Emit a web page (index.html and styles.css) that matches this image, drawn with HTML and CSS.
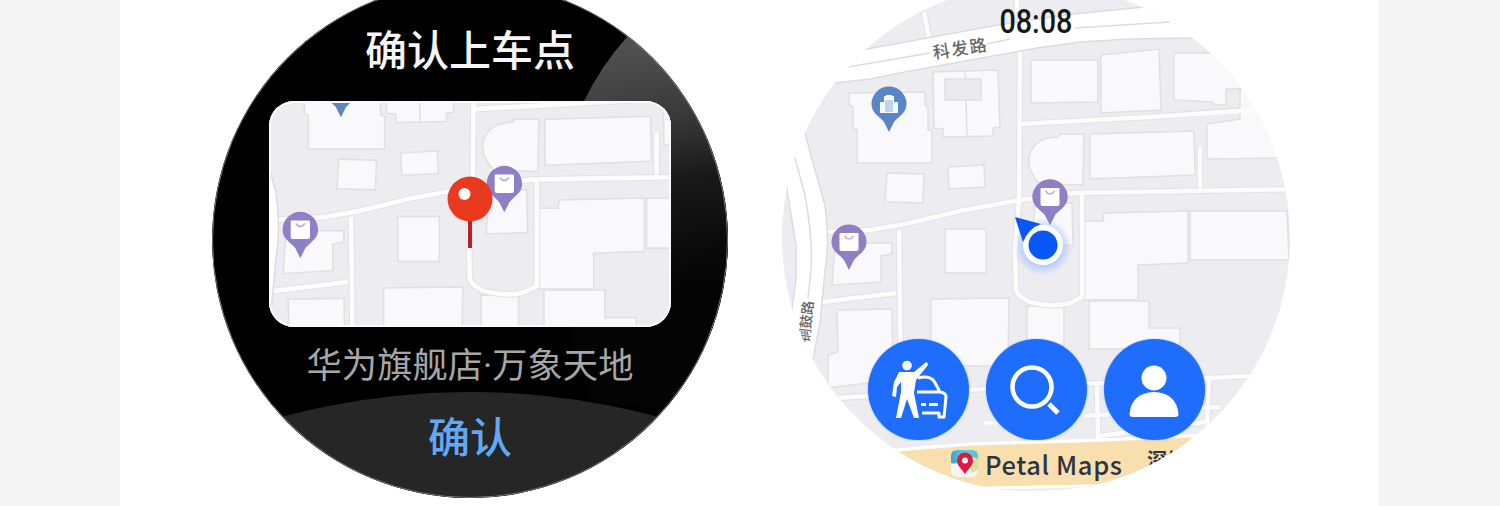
FILE: index.html
```html
<!DOCTYPE html>
<html lang="zh-CN">
<head>
<meta charset="utf-8">
<title>Petal Maps</title>
<link rel="stylesheet" href="styles.css">
</head>
<body>
<main class="sheet">
  <section class="watch watch-confirm">
    <svg class="backdrop" viewBox="212 -18 516 516">
      <defs>
        <linearGradient id="sheen" gradientUnits="userSpaceOnUse" x1="610" y1="50" x2="650" y2="300">
          <stop offset="0" stop-color="#505050"/><stop offset=".3" stop-color="#393939"/>
          <stop offset=".55" stop-color="#191919"/><stop offset=".85" stop-color="#090909"/><stop offset="1" stop-color="#040404"/>
        </linearGradient>
      </defs>
      <path fill="url(#sheen)" d="M627 37Q601 66 584 101C550 175 548 290 592 400L740 420V20Z"/>
      <circle cx="470" cy="1117" r="725" fill="#262626"/>
    </svg>
    <h1 class="title">确认上车点</h1>
    <div class="map-card">
      <svg class="card-map" viewBox="269 101 402 226">
        <use href="#city" transform="matrix(1.015 0 0 1.022 -561.4 -17.6)"/>
        <path d="M470 218V248" stroke="#b8202c" stroke-width="4"/>
        <circle cx="470" cy="199" r="22.5" fill="#e93a20"/>
        <circle cx="464.500" cy="194" r="6" fill="#fff"/>
      </svg>
    </div>
    <p class="place">华为旗舰店<span class="dot">·</span>万象天地</p>
    <button class="confirm">确认</button>
  </section>

  <section class="watch watch-map">
    <svg class="backdrop" viewBox="782 -16 508 508">
      <defs>
        <radialGradient id="glow"><stop offset=".5" stop-color="#79a9ff" stop-opacity=".65"/><stop offset="1" stop-color="#79a9ff" stop-opacity="0"/></radialGradient>
        <g id="shop">
          <path d="M-17.500-16A17.500 17.500 0 1 1 17.500-16C17.500-7 10-4 5 2L0 12L-5 2C-10-4-17.500-7-17.500-16Z" fill="#8f80c6"/>
          <path d="M-8.500-25H8.500Q9.500-25 9.500-24V-9Q9.500-7 7.500-7H-7.500Q-9.500-7-9.500-9V-24Q-9.500-25-8.500-25Z" fill="#fff"/>
          <path d="M-4.500-22Q0-16 4.500-22" fill="none" stroke="#b7ace0" stroke-width="1.600"/>
        </g>
        <g id="city">
          <rect x="770" y="-20" width="530" height="520" fill="#ededf1"/>
          <g fill="#f9f9fc" stroke="#e0e0e3" stroke-width="1.500">
            <path d="M849 93L925 92V105L928 107V130L932 131V163H857V130L853 128V107L849 105Z"/>
            <path d="M933 72L998 70L1000 127L993 128V136L943 137V129L934 128Z"/>
            <path d="M945 79H981V100H945ZM964 72L967 79" fill="#ebebee"/><path d="M966 100L967 137"/>
            <path d="M887 173L924 174L923 203L885 202Z"/><path d="M948 167L984 165L985 187L949 189Z"/>
            <path d="M1031 60H1098V102L1031 103Z"/><path d="M1101 55L1159 49L1161 110L1101 113Z"/>
            <path d="M1174 53H1225L1270 89H1226V105H1215L1212 102L1174 100Z"/>
            <path d="M1207 124L1240 119V89H1300V158L1207 159Z"/>
            <path d="M1040 184Q1020 163 1035 145Q1043 137 1058 137L1060 134H1084L1083 185Z"/>
            <path d="M1090 134L1194 131L1195 175L1090 179Z"/>
            <path d="M1035 203L1072 203L1073 245L1032 246Z"/>
            <path d="M1084 221H1103L1104 213L1188 211V263L1138 265V300H1082Z"/>
            <path d="M1190 211H1287L1289 260H1190Z"/>
            <path d="M1089 301H1149V328H1180V349H1089Z"/>
            <path d="M1027 306H1064V345H1027Z"/><path d="M931 299L1009 298L1008 366H931Z"/>
            <path d="M945 229H986V273H945Z"/>
            <path d="M837 310L892 309L893 380L828 388V355L838 352Z"/>
            <path d="M835 243L892 243V254L881 256V282L832 285Z"/>
          </g>
          <g fill="none" stroke="#e2e2e5" stroke-width="6.600">
            <path d="M826 232L870 230L905 224L960 211L1020 200L1075 193L1300 189"/>
            <path d="M1020 124L1150 117L1240 110"/>
            <path d="M1020 50L1019 200L1015 250L1016 290Q1018 297 1030 302Q1055 308 1070 303L1082 297V195"/>
            <path d="M1200 147V188M899 230L901 395M822 302L896 293"/>
            <path d="M835 398L1000 388L1250 376M1097 382L1098 442M1209 378L1207 430M1085 416L1220 407M1100 436L1205 422"/>
            <path d="M924 12L929 38M1017-5V12"/>
          </g>
          <g fill="none" stroke="#fcfcfd" stroke-width="4.600">
            <path d="M826 232L870 230L905 224L960 211L1020 200L1075 193L1300 189"/>
            <path d="M1020 124L1150 117L1300 107"/>
            <path d="M1020 50L1019 200L1015 250L1016 290Q1018 297 1030 302Q1055 308 1070 303L1082 297V195"/>
            <path d="M1200 147V188M899 230L901 395M822 302L896 293"/>
            <path d="M835 398L1000 388L1250 376M1097 382L1098 442M1209 378L1207 430M1085 416L1220 407M1100 436L1205 422"/>
            <path d="M924 12L929 38M1017-5V12"/>
          </g>
          <path d="M985 423H996" stroke="#fff" stroke-width="3" stroke-linecap="round"/>
          <g stroke="#dcdcdf" stroke-width="1.500">
            <path fill="#fff" d="M780 64L867 49L998 25L1073 14L1144 7L1250 0V38H1192L1130 39L1080 42L1037 48L910 71L870 79L834 83L780 88Z"/>
            <path fill="none" d="M848 67L930 53M987 44L1010 39M1075 28L1170 22"/>
            <path fill="#fff" d="M780 100H796L805 133L815 170L825 205Q830 240 825 270L820 323L813 360L780 380L792 307L796 280V245L787 190Z"/>
            <path fill="none" d="M795 158L805 195Q813 240 811 270L808 298"/>
          </g>
          <g transform="translate(889 120)">
            <path d="M-17.500-16A17.500 17.500 0 1 1 17.500-16C17.500-7 10-4 5 2L0 12L-5 2C-10-4-17.500-7-17.500-16Z" fill="#5a86c6"/>
            <path d="M-9-7V-18H-5V-24H-3V-25H3V-24H5V-18H9V-7Z" fill="#f4f8ff"/>
            <path d="M-4-20H4V-8H-4Z" fill="#c3d3ee"/>
          </g>
          <use href="#shop" x="849" y="258"/><use href="#shop" x="1050" y="213"/>
        </g>
      </defs>
      <use href="#city"/>
      <path d="M780 462L895 452L970 446L1100 442L1210 437V480L1115 484L970 487L780 490Z" fill="#fadfae"/>
      <path d="M1115 484L970 487L780 490V500H1290V380L1210 436L1155 467Z" fill="#fff"/>
      <path d="M995 489Q1035 494 1085 487Q1040 489 995 489Z" fill="#ededf1"/>
      <path d="M780 459L895 450L970 444L1100 440L1210 435" stroke="#fff" stroke-width="3" fill="none"/>
      <g class="road-name">
        <text x="934" y="59" transform="rotate(-9 934 59)" letter-spacing="1.500">科发路</text>
        <text x="809" y="343" font-size="14" transform="rotate(-84 809 343)">铜鼓路</text>
      </g>
      <circle cx="1043" cy="247" r="29" fill="url(#glow)"/>
      <use href="#shop" x="1050" y="213"/>
      <circle cx="1043" cy="245" r="20" fill="#fff"/>
      <path d="M1015 217L1041 224Q1029 228 1023 242Z" fill="#0b55f4"/>
      <circle cx="1043" cy="245" r="14.500" fill="#0758f7"/>
    </svg>
    <time class="clock">08:08</time>
    <nav class="actions">
      <button class="action" aria-label="hail">
        <svg viewBox="0 0 101 101" fill="none" stroke="#fff" stroke-linejoin="round">
          <circle cx="39" cy="26.500" r="4.800" fill="#fff" stroke="none"/>
          <path fill="#fff" stroke="none" d="M31 33H46L57 24L59 23L60 26L48 41L46 54L51 79H46L39 60L33 79H28L33 53V43L29 48L28 58L24 57L26 43Z"/>
          <path stroke-width="3" d="M50 39Q61 36 66 42L72 53Q78 54 78 58L76 78H71V74H54M49 53H72M53 65.500H58M61 65.500H70"/>
        </svg>
      </button>
      <button class="action" aria-label="search">
        <svg viewBox="0 0 101 101" fill="none" stroke="#fff">
          <circle cx="46" cy="48" r="19.500" stroke-width="4.600"/><path d="M63 65L72 74" stroke-width="5"/>
        </svg>
      </button>
      <button class="action" aria-label="profile">
        <svg viewBox="0 0 101 101" fill="#fff">
          <circle cx="50" cy="39" r="12.500"/><path d="M25.500 75Q27.500 54 50 53Q72.500 54 74.500 75Q74.500 78 71.500 78H28.500Q25.500 78 25.500 75Z"/>
        </svg>
      </button>
    </nav>
    <div class="brand">
      <svg class="brand-logo" viewBox="0 0 27 27">
        <defs><linearGradient id="sky" x2="1"><stop stop-color="#38a6cf"/><stop offset=".5" stop-color="#62cddf"/><stop offset="1" stop-color="#57c4c8"/></linearGradient></defs>
        <rect width="27" height="27" rx="6" fill="#f4f6ef"/>
        <path d="M6 0H21Q27 0 27 6V9Q18 5 12 10Q7 15 0 13V6Q0 0 6 0Z" fill="url(#sky)"/>
        <path d="M27 9V20L20 23V8Z" fill="#cfe5a0"/>
        <path d="M14 24C11 19 6 16 6 10.500A8 8 0 0 1 22 10.500C22 16 17 19 14 24Z" fill="#e5173f"/>
        <circle cx="14" cy="10.500" r="3" fill="#fff"/>
      </svg>
      <span class="brand-name">Petal Maps</span>
      <span class="district">深圳</span>
    </div>
  </section>
</main>
</body>
</html>
```
FILE: styles.css
```css
* { box-sizing: border-box; }
body {
  margin: 0;
  background: #f4f4f4;
  font-family: "Noto Sans CJK SC", sans-serif;
}
.sheet {
  display: flex;
  align-items: flex-start;
  gap: 54px;
  height: 506px;
  margin: 0 121px 0 120px;
  padding-left: 92px;
  overflow: hidden;
  background: #fff;
}
.watch {
  position: relative;
  display: flex;
  flex: none;
  flex-direction: column;
  align-items: center;
  border-radius: 50%;
  overflow: hidden;
}
.watch > * { position: relative; }
.watch > .backdrop {
  position: absolute;
  inset: 0;
  width: 100%;
  height: 100%;
}
button { border: 0; padding: 0; background: none; font-family: inherit; }

.watch-confirm {
  width: 516px;
  height: 516px;
  margin-top: -18px;
  padding-top: 36px;
  background: #000;
}
.watch-confirm::after {
  content: "";
  position: absolute;
  inset: 0;
  border: 1px solid #777;
  border-radius: 50%;
}
.title {
  margin: 0 0 23px;
  color: #f5f5f5;
  font-size: 42px;
  font-weight: 500;
  line-height: 60px;
}
.map-card {
  width: 402px;
  height: 226px;
  border-radius: 25px;
  overflow: hidden;
  background: #ededf1;
}
.card-map { display: block; width: 402px; height: 226px; }
.map-card::after {
  content: "";
  position: absolute;
  inset: 0;
  border: 2px solid #fafafa;
  border-radius: 25px;
}
.place {
  margin: 11px 0 14px;
  color: #a6a6a6;
  font-size: 35.300px;
  font-weight: 400;
  line-height: 50px;
  white-space: nowrap;
}
.dot { font-family: Roboto, sans-serif; font-weight: 400; }
.confirm {
  color: #62a8f5;
  font-size: 42px;
  font-weight: 500;
  line-height: 60px;
}

.watch-map {
  width: 508px;
  height: 508px;
  margin-top: -16px;
  padding-top: 18px;
  background: #fff;
}
.road-name {
  fill: #66666a;
  font-size: 17px;
  font-weight: 500;
  paint-order: stroke;
  stroke: #fff;
  stroke-width: 1px;
}
.clock {
  color: #17181a;
  font-family: Roboto, sans-serif;
  font-size: 33px;
  font-weight: 500;
  line-height: 40px;
  transform: scaleX(.87);
}
.actions { display: flex; gap: 17px; margin-top: 297px; }
.action {
  width: 101px;
  height: 101px;
  border-radius: 50%;
  background: #1e6dfc;
  box-shadow: 0 0 2px #1e6dfc80;
}
.action svg { display: block; }
.brand {
  display: flex;
  align-items: center;
  align-self: flex-start;
  height: 40px;
  margin: 3px 0 0 169px;
}
.brand-logo { width: 27px; height: 27px; margin-right: 7px; }
.brand-name {
  width: 162px;
  color: #2c3544;
  font-size: 25.500px;
  font-weight: 500;
  letter-spacing: .6px;
  white-space: nowrap;
}
.district {
  height: 30px;
  color: #34383f;
  font-size: 20px;
  font-weight: 700;
  line-height: 24px;
}
```
